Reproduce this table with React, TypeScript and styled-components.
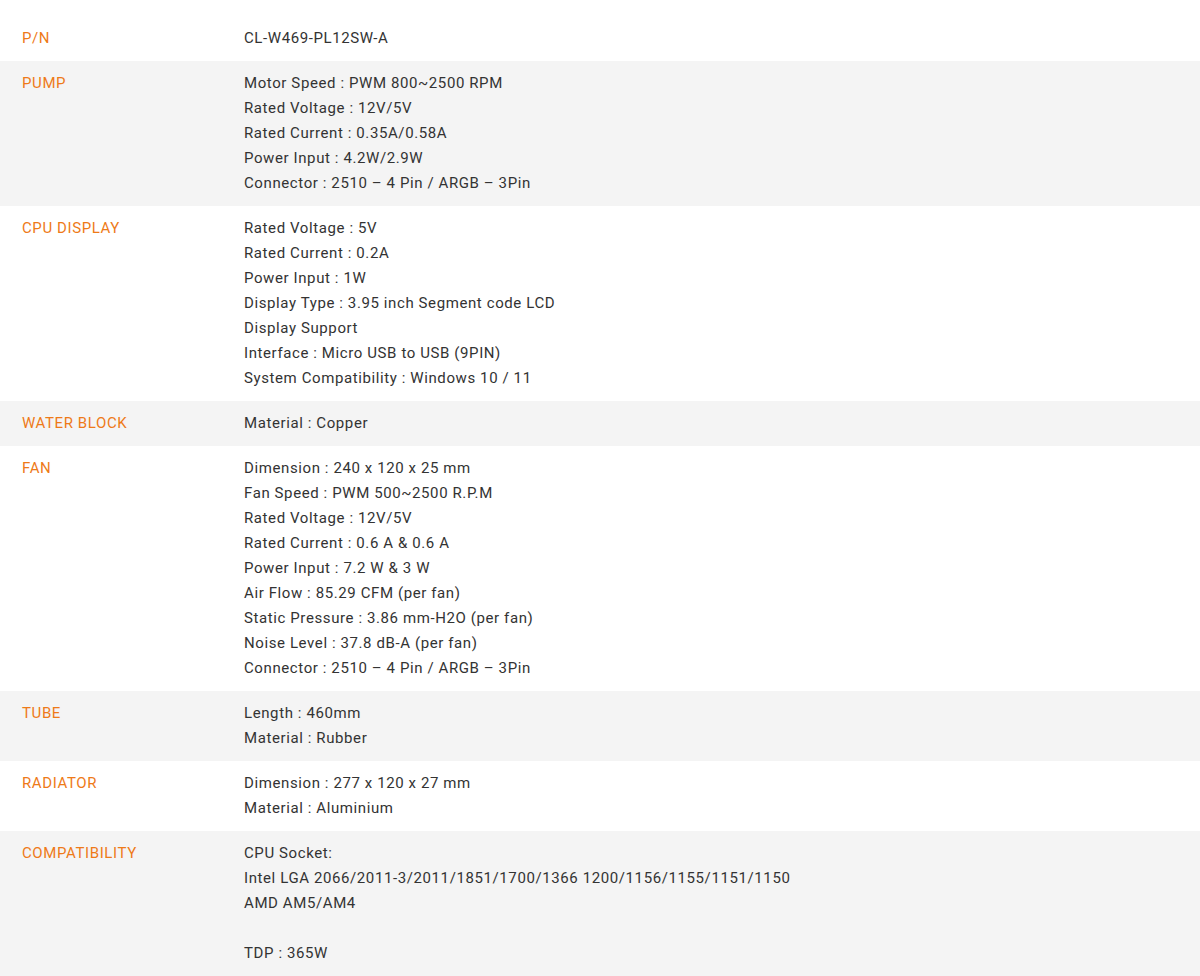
import React from "react";
import styled, { createGlobalStyle } from "styled-components";

const Global = createGlobalStyle`
  html, body { margin: 0; padding: 0; background: #fff; }
  body { font-family: Roboto, "Liberation Sans", sans-serif; }
`;

const Page = styled.div`
  padding-top: 16px;
`;

const Row = styled.div<{ $shade: boolean }>`
  display: grid;
  grid-template-columns: 244px 1fr;
  padding: 10px 0;
  background: ${(p) => (p.$shade ? "#f4f4f4" : "#fff")};
`;

const Label = styled.div`
  padding-left: 22px;
  font-size: 15px;
  line-height: 25px;
  letter-spacing: 0.6px;
  color: #ee7a18;
`;

const Values = styled.div`
  display: flex;
  flex-direction: column;
`;

const Line = styled.div`
  font-size: 15px;
  line-height: 25px;
  min-height: 25px;
  letter-spacing: 0.6px;
  color: #333;
`;

const specs: { label: string; lines: string[] }[] = [
  { label: "P/N", lines: ["CL-W469-PL12SW-A"] },
  {
    label: "PUMP",
    lines: [
      "Motor Speed : PWM 800~2500 RPM",
      "Rated Voltage : 12V/5V",
      "Rated Current : 0.35A/0.58A",
      "Power Input : 4.2W/2.9W",
      "Connector : 2510 – 4 Pin / ARGB – 3Pin",
    ],
  },
  {
    label: "CPU DISPLAY",
    lines: [
      "Rated Voltage : 5V",
      "Rated Current : 0.2A",
      "Power Input : 1W",
      "Display Type : 3.95 inch Segment code LCD",
      "Display Support",
      "Interface : Micro USB to USB (9PIN)",
      "System Compatibility : Windows 10 / 11",
    ],
  },
  { label: "WATER BLOCK", lines: ["Material : Copper"] },
  {
    label: "FAN",
    lines: [
      "Dimension : 240 x 120 x 25 mm",
      "Fan Speed : PWM 500~2500 R.P.M",
      "Rated Voltage : 12V/5V",
      "Rated Current : 0.6 A & 0.6 A",
      "Power Input : 7.2 W & 3 W",
      "Air Flow : 85.29 CFM (per fan)",
      "Static Pressure : 3.86 mm-H2O (per fan)",
      "Noise Level : 37.8 dB-A (per fan)",
      "Connector : 2510 – 4 Pin / ARGB – 3Pin",
    ],
  },
  { label: "TUBE", lines: ["Length : 460mm", "Material : Rubber"] },
  {
    label: "RADIATOR",
    lines: ["Dimension : 277 x 120 x 27 mm", "Material : Aluminium"],
  },
  {
    label: "COMPATIBILITY",
    lines: [
      "CPU Socket:",
      "Intel LGA 2066/2011-3/2011/1851/1700/1366 1200/1156/1155/1151/1150",
      "AMD AM5/AM4",
      "",
      "TDP : 365W",
    ],
  },
];

export default function App() {
  return (
    <>
      <Global />
      <Page>
        {specs.map((s, i) => (
          <Row key={s.label} $shade={i % 2 === 1}>
            <Label>{s.label}</Label>
            <Values>
              {s.lines.map((l, j) => (
                <Line key={j}>{l}</Line>
              ))}
            </Values>
          </Row>
        ))}
      </Page>
    </>
  );
}
